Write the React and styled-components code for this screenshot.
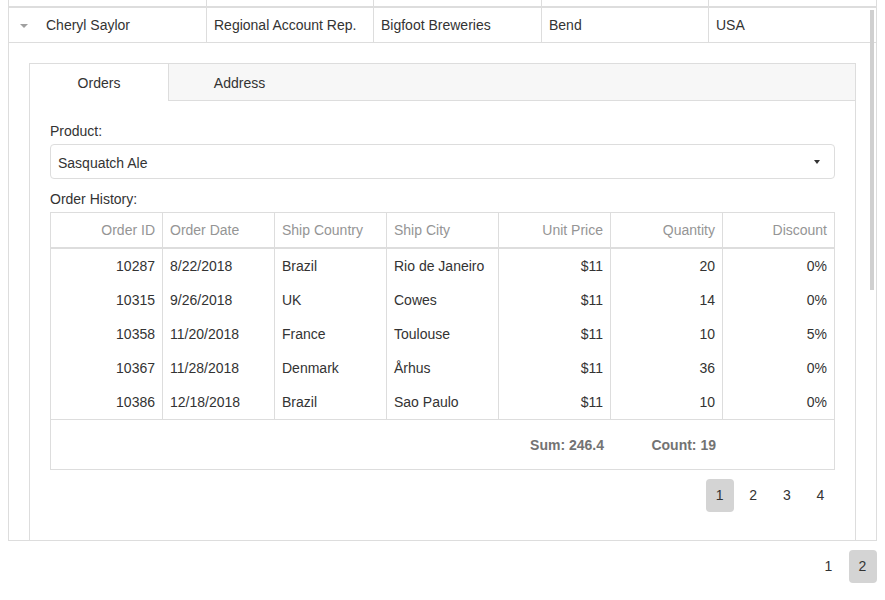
import React from "react";
import styled, { createGlobalStyle, css } from "styled-components";

const GlobalStyle = createGlobalStyle`
  html, body {
    margin: 0;
    padding: 0;
    background: #fff;
    overflow: hidden;
  }
  body {
    font-family: "Liberation Sans", Arial, Helvetica, sans-serif;
    font-size: 14px;
    line-height: 17px;
    color: #333;
  }
  * { box-sizing: border-box; }
`;

const Page = styled.div`
  padding: 0 8px;
`;

const Grid = styled.div`
  margin-top: -29px;
  border: 1px solid #ddd;
  position: relative;
`;

const rowColumns = css`
  display: grid;
  grid-template-columns: 198px 167px 168px 167px 1fr;
`;

const HeaderRow = styled.div`
  ${rowColumns};
  height: 36px;
  border-bottom: 2px solid #ddd;
`;

const Cell = styled.div`
  display: flex;
  align-items: center;
  padding: 1px 7px 0;
  border-right: 1px solid #ddd;
  white-space: nowrap;
  overflow: hidden;
  &:last-child { border-right: none; }
`;

const Body = styled.div`
  height: 532px;
  overflow: hidden;
  position: relative;
`;

const DataRow = styled.div`
  ${rowColumns};
  height: 35px;
  border-bottom: 1px solid #ddd;
`;

const NameCell = styled(Cell)`
  padding: 1px 0 0;
`;

const ExpandBox = styled.div`
  width: 30px;
  height: 100%;
  display: flex;
  align-items: center;
  justify-content: center;
  margin-right: 7px;
`;

const Caret = styled.span`
  width: 0;
  height: 0;
  border-left: ${(p) => p.$w}px solid transparent;
  border-right: ${(p) => p.$w}px solid transparent;
  border-top: ${(p) => p.$h}px solid ${(p) => p.$color};
`;

const ScrollThumb = styled.div`
  position: absolute;
  top: 2px;
  right: 2px;
  width: 4px;
  height: 280px;
  background: #d0d0d0;
`;

const DetailRow = styled.div`
  padding: 20px;
`;

const TabPanel = styled.div`
  border: 1px solid #ddd;
`;

const TabBar = styled.div`
  display: flex;
  height: 37px;
  background: #f7f7f7;
  box-shadow: inset 0 -1px 0 #ddd;
`;

const Tab = styled.div`
  width: ${(p) => p.$width}px;
  display: flex;
  align-items: center;
  justify-content: center;
  padding-top: 1px;
  color: #333;
  ${(p) =>
    p.$selected &&
    css`
      background: #fff;
      border-right: 1px solid #ddd;
    `}
`;

const PanelContent = styled.div`
  padding: 22px 20px 60px;
`;

const Label = styled.div`
  line-height: 17px;
  margin-top: ${(p) => p.$top || 0}px;
  margin-bottom: 4px;
`;

const SelectBox = styled.div`
  height: 35px;
  border: 1px solid #ddd;
  border-radius: 4px;
  display: flex;
  align-items: center;
  justify-content: space-between;
  padding: 0 14px 0 7px;
`;

const SelectValue = styled.span`
  padding-top: 3px;
`;

const Table = styled.div`
  border: 1px solid #ddd;
`;

const tableColumns = css`
  display: grid;
  grid-template-columns: repeat(6, 112px) 1fr;
`;

const THead = styled.div`
  ${tableColumns};
  height: 36px;
  border-bottom: 2px solid #ddd;
`;

const TRows = styled.div`
  ${tableColumns};
`;

const TCell = styled.div`
  height: 34px;
  display: flex;
  align-items: center;
  justify-content: ${(p) => (p.$right ? "flex-end" : "flex-start")};
  padding: 0 7px;
  border-right: 1px solid #ddd;
  white-space: nowrap;
  overflow: hidden;
  color: ${(p) => (p.$head ? "#959595" : "#333")};
  &:nth-child(7n) { border-right: none; }
`;

const TFooter = styled.div`
  ${tableColumns};
  height: 50px;
  border-top: 1px solid #ddd;
`;

const FooterCell = styled.div`
  display: flex;
  align-items: center;
  justify-content: flex-end;
  padding: 1px 7px 0;
  font-weight: bold;
  color: #737373;
  grid-column: ${(p) => p.$col};
`;

const Pager = styled.div`
  display: flex;
  justify-content: flex-end;
  gap: ${(p) => p.$gap}px;
  margin-top: ${(p) => p.$top}px;
`;

const PageItem = styled.div`
  width: 28px;
  height: 33px;
  display: flex;
  align-items: center;
  justify-content: center;
  padding-right: 1px;
  border-radius: 4px;
  color: #333;
  background: ${(p) => (p.$selected ? "#d4d4d4" : "transparent")};
`;

const columns = [
  { title: "Order ID", right: true },
  { title: "Order Date" },
  { title: "Ship Country" },
  { title: "Ship City" },
  { title: "Unit Price", right: true },
  { title: "Quantity", right: true },
  { title: "Discount", right: true },
];

const orders = [
  ["10287", "8/22/2018", "Brazil", "Rio de Janeiro", "$11", "20", "0%"],
  ["10315", "9/26/2018", "UK", "Cowes", "$11", "14", "0%"],
  ["10358", "11/20/2018", "France", "Toulouse", "$11", "10", "5%"],
  ["10367", "11/28/2018", "Denmark", "Århus", "$11", "36", "0%"],
  ["10386", "12/18/2018", "Brazil", "Sao Paulo", "$11", "10", "0%"],
];

export default function App() {
  return (
    <Page>
      <GlobalStyle />
      <Grid>
        <HeaderRow>
          <Cell />
          <Cell />
          <Cell />
          <Cell />
          <Cell />
        </HeaderRow>
        <Body>
          <DataRow>
            <NameCell>
              <ExpandBox>
                <Caret $w={4} $h={4} $color="#a0a0a0" />
              </ExpandBox>
              Cheryl Saylor
            </NameCell>
            <Cell>Regional Account Rep.</Cell>
            <Cell>Bigfoot Breweries</Cell>
            <Cell>Bend</Cell>
            <Cell>USA</Cell>
          </DataRow>
          <DetailRow>
            <TabPanel>
              <TabBar>
                <Tab $selected $width={139}>Orders</Tab>
                <Tab $width={141}>Address</Tab>
              </TabBar>
              <PanelContent>
                <Label>Product:</Label>
                <SelectBox>
                  <SelectValue>Sasquatch Ale</SelectValue>
                  <Caret $w={3.5} $h={4} $color="#333" />
                </SelectBox>
                <Label $top={12}>Order History:</Label>
                <Table>
                  <THead>
                    {columns.map((c) => (
                      <TCell key={c.title} $head $right={c.right}>
                        {c.title}
                      </TCell>
                    ))}
                  </THead>
                  <TRows>
                    {orders.map((row) =>
                      row.map((v, i) => (
                        <TCell key={row[0] + "-" + i} $right={columns[i].right}>
                          {v}
                        </TCell>
                      ))
                    )}
                  </TRows>
                  <TFooter>
                    <FooterCell $col={5}>Sum: 246.4</FooterCell>
                    <FooterCell $col={6}>Count: 19</FooterCell>
                  </TFooter>
                </Table>
                <Pager $top={9} $gap={5.67}>
                  <PageItem $selected>1</PageItem>
                  <PageItem>2</PageItem>
                  <PageItem>3</PageItem>
                  <PageItem>4</PageItem>
                </Pager>
              </PanelContent>
            </TabPanel>
          </DetailRow>
          <ScrollThumb />
        </Body>
      </Grid>
      <Pager $top={9} $gap={6}>
        <PageItem>1</PageItem>
        <PageItem $selected>2</PageItem>
      </Pager>
    </Page>
  );
}
